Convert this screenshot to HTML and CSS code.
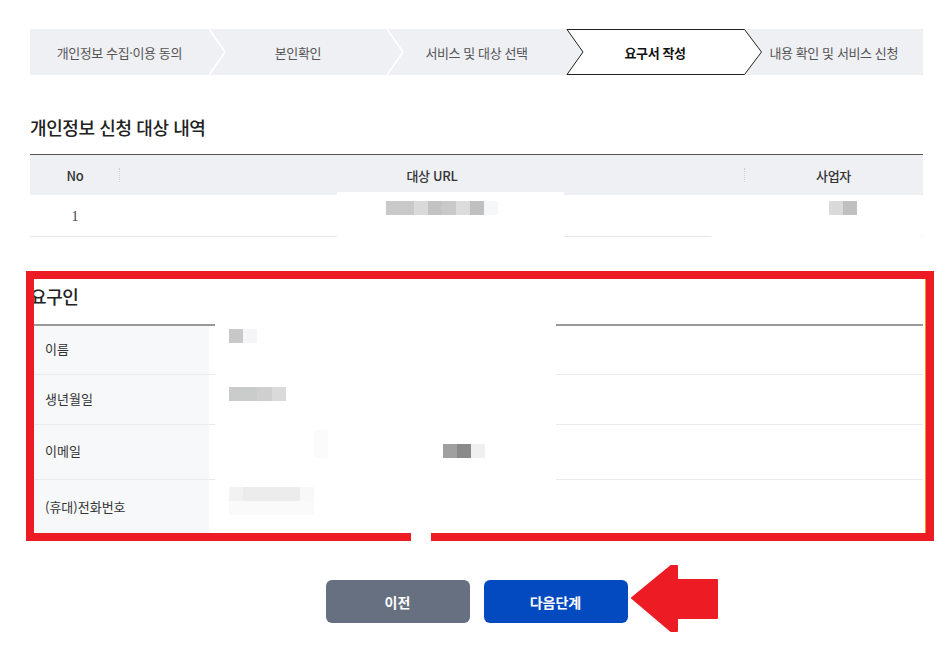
FILE: index.html
```html
<!DOCTYPE html>
<html lang="ko">
<head>
<meta charset="utf-8">
<title>요구서 작성</title>
<link rel="stylesheet" href="styles.css">
</head>
<body>
<div class="page">
  <ol class="stepper">
    <li class="step"><span class="step-label">개인정보 수집·이용 동의</span><svg class="sep" width="18" height="46" viewBox="0 0 18 46"><polyline points="0,0 16,23 0,46" /></svg></li>
    <li class="step"><span class="step-label">본인확인</span><svg class="sep" width="18" height="46" viewBox="0 0 18 46"><polyline points="0,0 16,23 0,46" /></svg></li>
    <li class="step"><span class="step-label">서비스 및 대상 선택</span></li>
    <li class="step active"><svg class="active-shape" width="198" height="46" viewBox="0 0 198 46"><polygon points="1,0.5 178.5,0.5 195.5,23 178.5,45.5 1,45.5 17,23" /></svg><span class="step-label">요구서 작성</span></li>
    <li class="step"><span class="step-label">내용 확인 및 서비스 신청</span></li>
  </ol>

  <h2 class="title title-list">개인정보 신청 대상 내역</h2>
  <div class="list">
    <div class="list-head">
      <div class="cell col-no sep-right">No</div>
      <div class="cell col-url">대상 URL</div>
      <div class="cell col-biz sep-left">사업자</div>
    </div>
    <div class="list-row">
      <div class="cell col-no num">1</div>
      <div class="cell col-url"></div>
      <div class="cell col-biz"></div>
    </div>
  </div>

  <section class="requester">
    <h2 class="title">요구인</h2>
    <div class="info">
      <div class="info-row r1"><div class="info-th">이름</div><div class="info-td"></div></div>
      <div class="info-row r2"><div class="info-th">생년월일</div><div class="info-td"></div></div>
      <div class="info-row r3"><div class="info-th">이메일</div><div class="info-td"></div></div>
      <div class="info-row r4"><div class="info-th">(휴대)전화번호</div><div class="info-td"></div></div>
    </div>
  </section>

  <div class="actions">
    <button class="btn btn-prev" type="button">이전</button>
    <button class="btn btn-next" type="button">다음단계</button>
  </div>

  <!-- redactions -->
  <div class="wipe wipe-url"></div>
  <div class="wipe wipe-biz"></div>
  <div class="wipe wipe-info"></div>
  <div class="mz mz-url"></div>
  <div class="mz mz-biz"></div>
  <div class="mz mz-name"></div>
  <div class="mz mz-birth"></div>
  <div class="mz mz-mail-faint"></div>
  <div class="mz mz-mail"></div>
  <div class="mz mz-phone"></div>
  <div class="mz mz-phone2"></div>

  <!-- annotations -->
  <div class="annot-box"></div>
  <div class="annot-edge"></div>
  <div class="annot-notch"></div>
  <svg class="annot-arrow" width="90" height="70" viewBox="0 0 90 70"><polygon points="2,34 41,2 47,2 47,16 87,16 87,54 47,54 47,67 41,67" /></svg>
</div>
</body>
</html>
```
FILE: styles.css
```css
* { box-sizing: border-box; }

body {
  margin: 0;
  background: #fff;
  color: #222;
  font-family: "Noto Sans CJK KR", "Noto Sans", sans-serif;
}

.page {
  position: relative;
  width: 949px;
  height: 658px;
  padding: 29px 26px 0 30px;
}

/* stepper */
.stepper {
  display: flex;
  height: 46px;
  margin: 0;
  padding: 0;
  list-style: none;
  background: #eef0f3;
}

.step {
  position: relative;
  flex: 1 1 0;
  display: flex;
  align-items: center;
  justify-content: center;
  font-size: 13px;
  color: #555;
  letter-spacing: -0.4px;
}

.step-label {
  position: relative;
  z-index: 1;
}

.sep {
  position: absolute;
  top: 0;
  left: 100%;
  z-index: 2;
}

.sep polyline {
  fill: none;
  stroke: #fff;
  stroke-width: 1.6;
}

.step.active {
  color: #111;
  font-weight: 700;
}

.active-shape {
  position: absolute;
  top: 0;
  left: 0;
  z-index: 3;
  overflow: visible;
}

.active .step-label { z-index: 4; }

.active-shape polygon {
  fill: #fff;
  stroke: #222;
  stroke-width: 1;
}

/* titles */
.title {
  margin: 0;
  font-size: 18px;
  line-height: 24px;
  font-weight: 500;
  color: #222;
  letter-spacing: -0.4px;
}

.title-list {
  margin-top: 40px;
  margin-bottom: 15px;
}

/* list table */
.list {
  border-top: 1px solid #555;
}

.list-head,
.list-row {
  display: grid;
  grid-template-columns: 90px 1fr 179px;
}

.list-head {
  height: 40px;
  background: #eef0f3;
  font-size: 13px;
  font-weight: 500;
  color: #333;
  letter-spacing: -0.3px;
}

.list-row {
  height: 42px;
  border-bottom: 1px solid #e6e6e6;
}

.cell {
  position: relative;
  display: flex;
  align-items: center;
  justify-content: center;
}

.sep-right::after,
.sep-left::after {
  content: "";
  position: absolute;
  top: 13px;
  bottom: 13px;
  border-left: 1px dotted #cdd2d9;
}

.sep-right::after { right: 0; }
.sep-left::after { left: 0; }

.num {
  padding-top: 3px;
  font-family: "Liberation Serif", serif;
  font-size: 14px;
  color: #444;
}

/* requester */
.requester {
  margin-top: 47px;
}

.requester .title {
  margin-bottom: 16px;
}

.info {
  border-top: 2px solid #999;
}

.info-row {
  display: flex;
  border-bottom: 1px solid #ebebeb;
}

.r1 { height: 49px; }
.r2 { height: 50px; }
.r3 { height: 55px; }
.r4 { height: 55px; border-bottom: 0; }

.info-th {
  width: 179px;
  display: flex;
  align-items: center;
  padding: 0 0 3px 15px;
  background: #f7f8fa;
  font-size: 13px;
  color: #333;
}

.info-td {
  flex: 1;
}

/* buttons */
.actions {
  display: flex;
  justify-content: center;
  gap: 14px;
  margin-top: 45px;
}

.btn {
  width: 144px;
  height: 43px;
  border: 0;
  border-radius: 6px;
  color: #fff;
  font-family: "Noto Sans CJK KR", "Noto Sans", sans-serif;
  font-size: 14px;
  font-weight: 700;
}

.btn-prev { background: #667080; }
.btn-next { background: #0349bf; }

/* redactions */
.wipe {
  position: absolute;
  background: #fff;
}

.wipe-url { left: 337px; top: 192px; width: 227px; height: 46px; }
.wipe-biz { left: 711px; top: 195px; width: 211px; height: 43px; }
.wipe-info { left: 215px; top: 322px; width: 341px; height: 211px; }

.mz {
  position: absolute;
  height: 14px;
}

.mz-url {
  left: 386px;
  top: 201px;
  width: 112px;
  background: linear-gradient(to right, #c9c9c9 0 28px, #dadada 28px 42px, #c3c3c3 42px 56px, #c9c9c9 56px 70px, #dcdcdc 70px 84px, #c0c0c0 84px 98px, #f6f7f9 98px 112px);
}

.mz-biz {
  left: 829px;
  top: 201px;
  width: 28px;
  background: linear-gradient(to right, #dadada 0 14px, #c0c0c0 14px 28px);
}

.mz-name {
  left: 229px;
  top: 329px;
  width: 28px;
  background: linear-gradient(to right, #c8c8c8 0 14px, #f5f5f7 14px 28px);
}

.mz-birth {
  left: 229px;
  top: 387px;
  width: 57px;
  background: linear-gradient(to right, #cacccc 0 28px, #cfcfcf 28px 43px, #dadada 43px 57px);
}

.mz-mail-faint {
  left: 314px;
  top: 430px;
  width: 14px;
  height: 28px;
  background: #fbfbfb;
}

.mz-mail {
  left: 443px;
  top: 444px;
  width: 42px;
  background: linear-gradient(to right, #a0a0a0 0 14px, #8a8a8a 14px 28px, #f0f0f0 28px 42px);
}

.mz-phone {
  left: 229px;
  top: 487px;
  width: 85px;
  background: linear-gradient(to right, #f2f2f2 0 14px, #ececec 14px 71px, #f8f8f8 71px 85px);
}

.mz-phone2 {
  left: 229px;
  top: 501px;
  width: 85px;
  background: #fafafa;
}

/* annotations */
.annot-box {
  position: absolute;
  left: 26px;
  top: 271px;
  width: 908px;
  height: 270px;
  border: 8px solid #ed1c24;
  pointer-events: none;
}

.annot-edge {
  position: absolute;
  left: 925px;
  top: 279px;
  width: 1px;
  height: 254px;
  background: #f7941d;
}

.annot-notch {
  position: absolute;
  left: 411px;
  top: 532px;
  width: 20px;
  height: 9px;
  background: #fff;
}

.annot-arrow {
  position: absolute;
  left: 630px;
  top: 564px;
}

.annot-arrow polygon {
  fill: #ed1c24;
  stroke: #ed1c24;
  stroke-width: 2;
  stroke-linejoin: round;
}
```
